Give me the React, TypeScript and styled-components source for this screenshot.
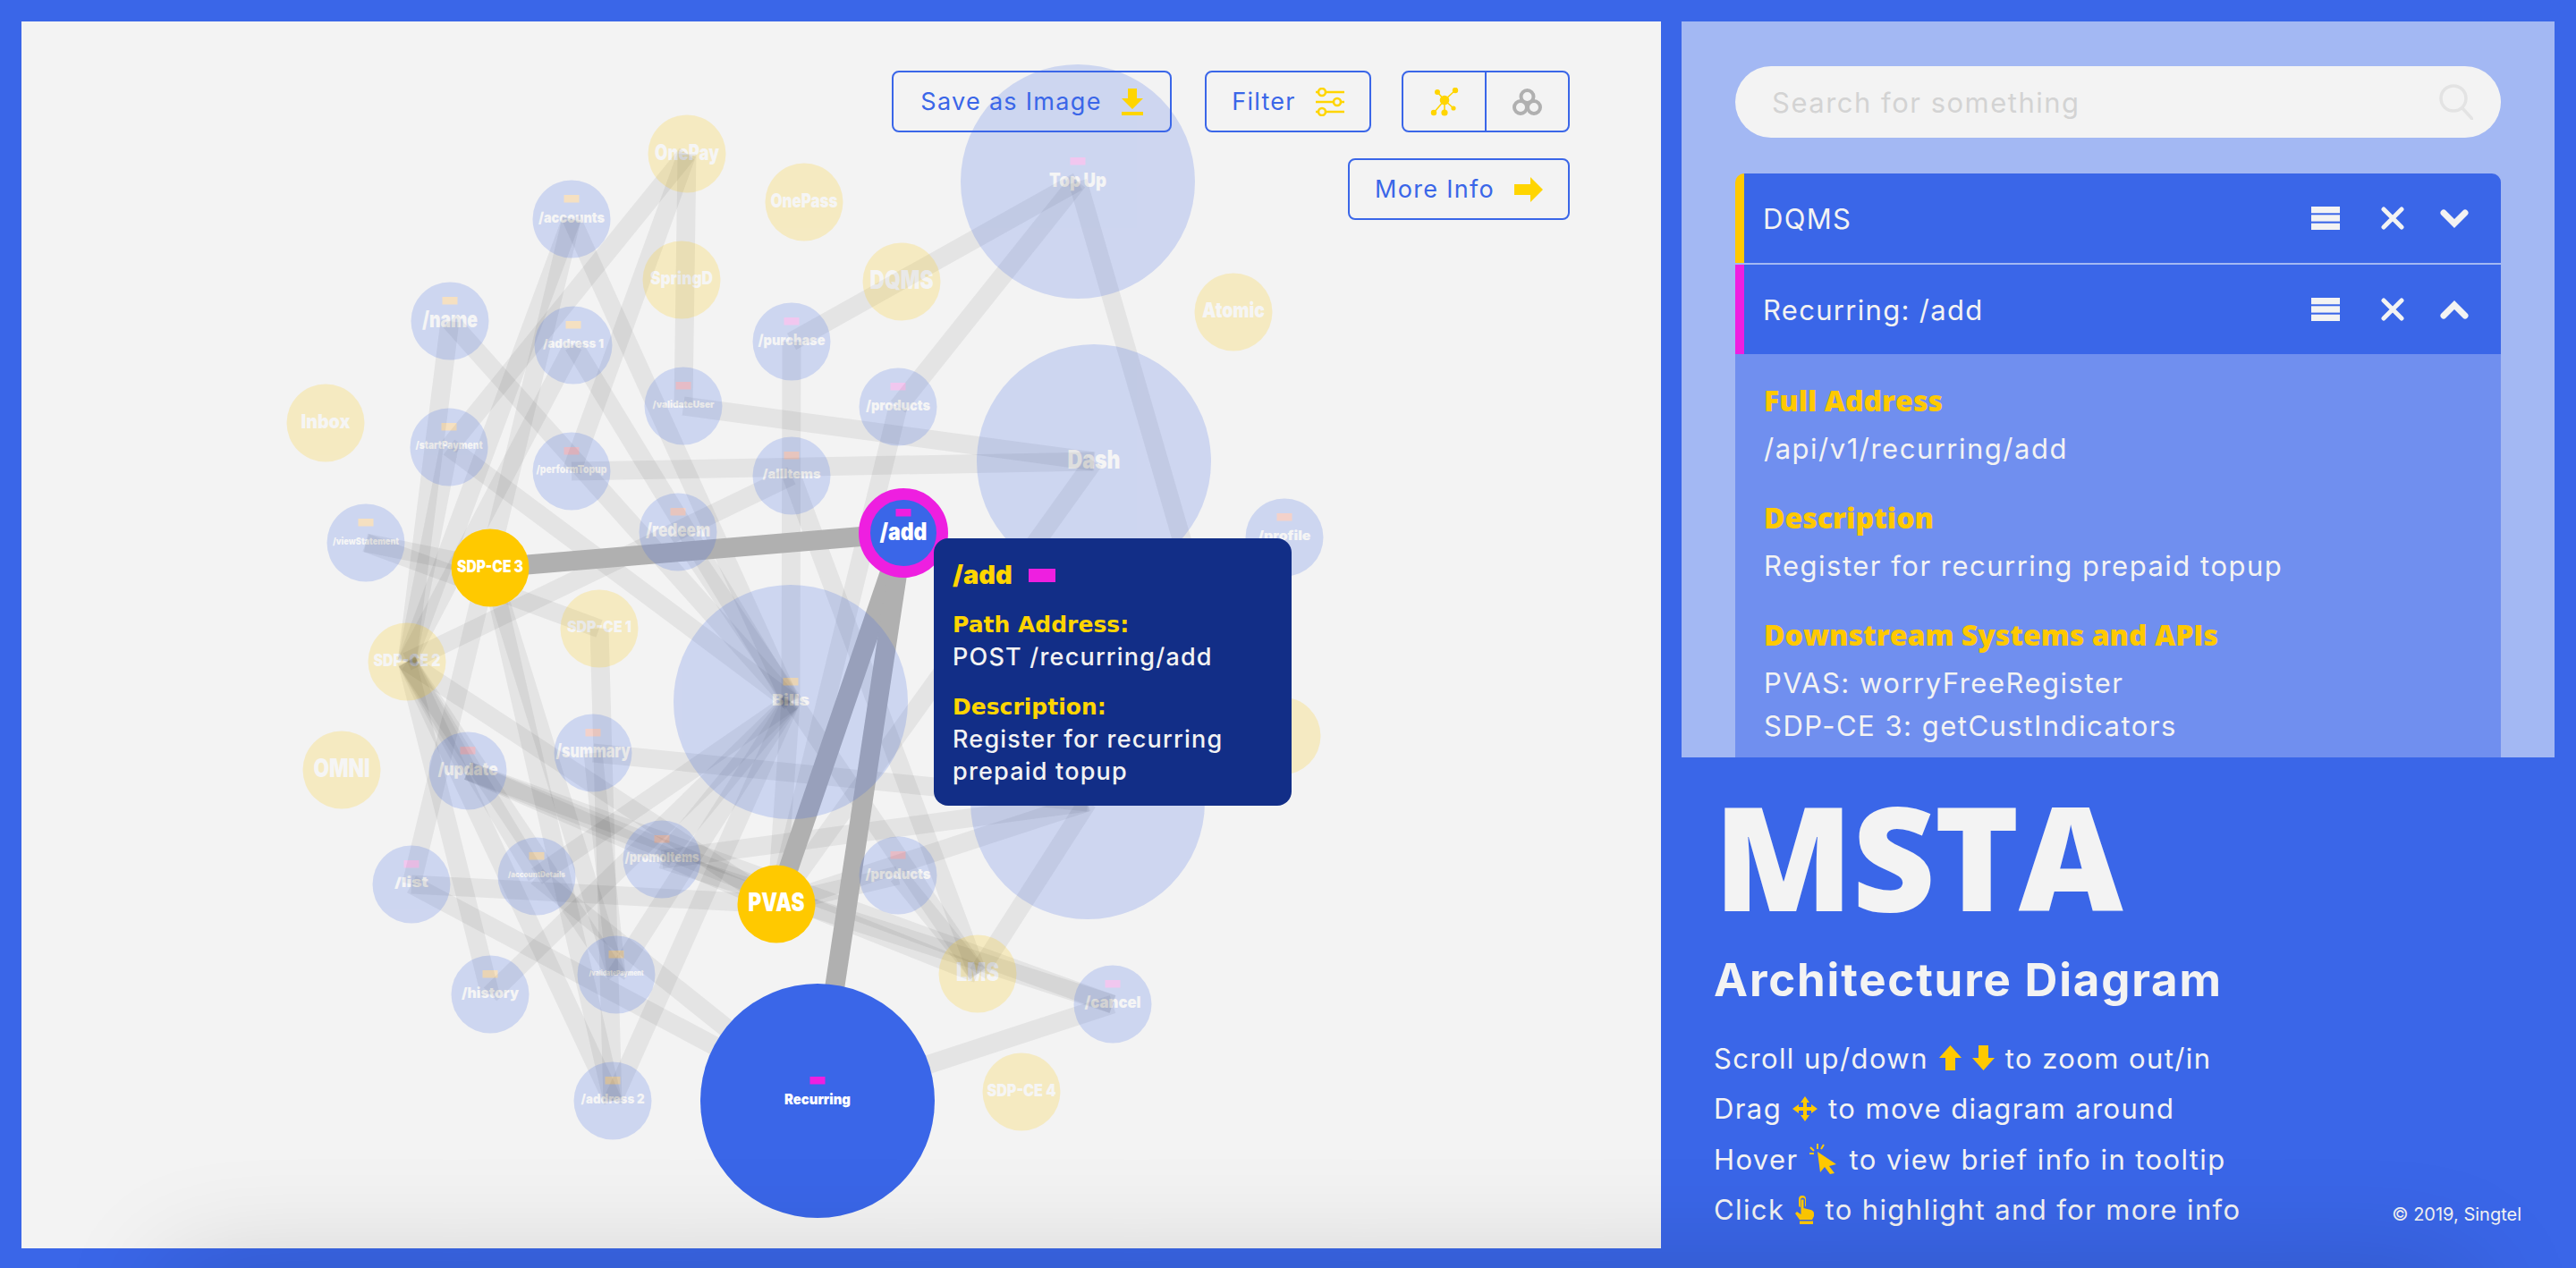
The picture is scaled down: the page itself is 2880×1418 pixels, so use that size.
import React from "react";
import styled, { createGlobalStyle } from "styled-components";

const BLUE = "#3a66e8";
const GOLD = "#ffc900";
const BRIGHT = "#ffd500";
const SANS = `Inter, "Noto Sans", "Liberation Sans", sans-serif`;
const HEAVY = `"Open Sans", "Noto Sans", "Liberation Sans", sans-serif`;
const WIDE = `"DejaVu Sans", Inter, sans-serif`;

const Global = createGlobalStyle`
  html, body { margin: 0; padding: 0; background: ${BLUE}; }
  * { box-sizing: border-box; }
`;

const Page = styled.div`
  position: relative;
  width: 2880px;
  height: 1418px;
  padding: 24px;
  display: grid;
  grid-template-columns: 1833px 976px;
  column-gap: 23px;
  background: ${BLUE};
  font-family: ${SANS};
  overflow: hidden;
`;
const BottomShade = styled.div`
  position: absolute;
  left: 190px;
  right: 120px;
  top: 1418px;
  height: 300px;
  pointer-events: none;
  box-shadow: 0 0 130px rgba(0, 0, 0, 0.16);
`;
const Canvas = styled.section`
  position: relative;
  height: 1372px;
  background: #f3f3f3;
  overflow: hidden;
`;
const Graph = styled.svg`
  display: block;
  width: 100%;
  height: 100%;
`;
const Edge = styled.line<{ $hot?: boolean }>`
  stroke: ${(p) => (p.$hot ? "#b0b0b0" : "rgba(0,0,0,0.06)")};
  stroke-width: ${(p) => (p.$hot ? 22 : 21)}px;
`;
const NodeGroup = styled.g<{ $on?: boolean }>`
  opacity: ${(p) => (p.$on ? 1 : 0.2)};
`;
const NodeLabel = styled.text`
  font-family: ${SANS};
  font-weight: 900;
  fill: #fff;
  text-anchor: middle;
`;

const Toolbar = styled.div`
  position: absolute;
  top: 55px;
  right: 102px;
  display: flex;
  flex-direction: column;
  align-items: flex-end;
  gap: 29px;
`;
const ToolRow = styled.div`
  display: flex;
  gap: 34px;
`;
const ToolButton = styled.button<{ $w: number }>`
  width: ${(p) => p.$w}px;
  height: 69px;
  display: flex;
  align-items: center;
  justify-content: center;
  gap: 22px;
  padding: 0;
  border: 2px solid ${BLUE};
  border-radius: 8px;
  background: transparent;
  color: ${BLUE};
  font-family: ${SANS};
  font-size: 27px;
  font-weight: 400;
  letter-spacing: 1.3px;
`;
const SaveButton = styled(ToolButton)`
  margin-right: 3px;
`;
const Toggle = styled.div`
  width: 188px;
  height: 69px;
  display: grid;
  grid-template-columns: 93px 1fr;
  border: 2px solid ${BLUE};
  border-radius: 8px;
`;
const ToggleCell = styled.div<{ $first?: boolean }>`
  display: flex;
  align-items: center;
  justify-content: center;
  border-right: ${(p) => (p.$first ? `2px solid ${BLUE}` : "none")};
`;

const Tip = styled.aside`
  position: absolute;
  left: 1020px;
  top: 578px;
  width: 400px;
  height: 299px;
  padding: 19px 20px 0 21px;
  background: #122e87;
  border-radius: 16px;
  color: #f3f3f3;
  font-size: 27px;
  font-weight: 500;
  letter-spacing: 1.2px;
  line-height: 36px;
`;
const TipTitle = styled.div`
  display: flex;
  align-items: center;
  gap: 18px;
  color: ${BRIGHT};
  font-size: 29px;
  font-weight: 900;
  letter-spacing: 0;
  height: 44px;
  margin-bottom: 16px;
`;
const TipSwatch = styled.span`
  width: 30px;
  height: 15px;
  background: #ee1fe0;
`;
const TipKey = styled.div`
  font-family: ${WIDE};
  color: ${BRIGHT};
  font-size: 25px;
  font-weight: 700;
  letter-spacing: 0;
`;
const TipText = styled.div`
  margin-bottom: 20px;
`;

const Side = styled.div`
  display: flex;
  flex-direction: column;
  height: 1372px;
`;
const Finder = styled.section`
  height: 823px;
  padding: 50px 60px 0;
  background: #a3b8f3;
  overflow: hidden;
`;
const SearchBox = styled.div`
  height: 80px;
  border-radius: 40px;
  background: #f3f3f3;
  display: flex;
  align-items: center;
  justify-content: space-between;
  padding: 0 31px 0 41px;
  color: #d3d3d3;
  font-size: 31px;
  letter-spacing: 1.5px;
  margin-bottom: 40px;
`;
const Row = styled.div<{ $mark: string; $top?: boolean }>`
  height: 100px;
  display: flex;
  align-items: center;
  padding: 0 36px 0 21px;
  background: ${BLUE};
  border-left: 10px solid ${(p) => p.$mark};
  border-radius: ${(p) => (p.$top ? "10px 10px 0 0" : "0")};
  margin-bottom: ${(p) => (p.$top ? "2px" : "0")};
  color: #f3f3f3;
  font-size: 31px;
  letter-spacing: 1.3px;
`;
const RowName = styled.span`
  flex: 1;
`;
const RowIcons = styled.span`
  display: flex;
  align-items: center;
  gap: 39px;
`;
const BarsSvg = styled.svg`
  margin-right: 6px;
`;
const Details = styled.div`
  background: #708fef;
  padding: 30px 32px;
  height: 600px;
  color: #f3f3f3;
  font-size: 31px;
  letter-spacing: 1.5px;
  line-height: 48px;
`;
const DetailHead = styled.div`
  font-family: ${HEAVY};
  color: ${GOLD};
  font-size: 32px;
  font-weight: 800;
  letter-spacing: 0;
  line-height: 44px;
  margin-bottom: 8px;
`;
const DetailBlock = styled.div`
  margin-bottom: 31px;
`;

const Intro = styled.section`
  position: relative;
  flex: 1;
  padding: 30px 0 0 36px;
  color: #f3f3f3;
`;
const Logo = styled.h1`
  margin: 0;
  font-family: ${HEAVY};
  font-size: 161px;
  font-weight: 800;
  line-height: 160px;
  letter-spacing: -1px;
`;
const Sub = styled.h2`
  margin: 29px 0 29px;
  font-size: 51px;
  font-weight: 700;
  letter-spacing: 1.8px;
  line-height: 60px;
`;
const HelpLine = styled.div`
  display: flex;
  align-items: center;
  gap: 12px;
  height: 56.5px;
  font-size: 31px;
  letter-spacing: 1.4px;
`;
const Copy = styled.div`
  position: absolute;
  right: 37px;
  bottom: 26px;
  font-size: 20px;
`;

type N = { id: string; label?: string; x: number; y: number; w: number; kind: "b" | "y"; big?: boolean; tag?: string; on?: boolean };
const O = "#ff9a00", M = "#ee1fe0", C = "#f0205a", R = "#f5502a";
const nodes: N[] = [
  { id: "OnePay", x: 768, y: 172, w: 72, kind: "y" },
  { id: "OnePass", x: 899, y: 226, w: 75, kind: "y" },
  { id: "Atomic", x: 1379, y: 349, w: 70, kind: "y" },
  { id: "SpringD", x: 762, y: 313, w: 70, kind: "y" },
  { id: "DQMS", x: 1008, y: 315, w: 71, kind: "y" },
  { id: "Inbox", x: 364, y: 473, w: 55, kind: "y" },
  { id: "SDP-CE 1", x: 670, y: 703, w: 72, kind: "y" },
  { id: "SDP-CE 2", x: 455, y: 740, w: 75, kind: "y" },
  { id: "OMNI", x: 382, y: 861, w: 63, kind: "y" },
  { id: "LMS", x: 1093, y: 1089, w: 48, kind: "y" },
  { id: "SDP-CE 4", x: 1142, y: 1221, w: 77, kind: "y" },
  { id: "Extra", label: "Chat", x: 1433, y: 823, w: 50, kind: "y" },
  { id: "Top Up", x: 1205, y: 203, w: 64, kind: "b", big: true, tag: M },
  { id: "Dash", x: 1223, y: 516, w: 59, kind: "b", big: true },
  { id: "Bills", x: 884, y: 785, w: 42, kind: "b", big: true, tag: O },
  { id: "Loans", x: 1216, y: 897, w: 60, kind: "b", big: true },
  { id: "/accounts", x: 639, y: 245, w: 74, kind: "b", tag: O },
  { id: "/name", x: 503, y: 359, w: 62, kind: "b", tag: O },
  { id: "/address 1", x: 641, y: 386, w: 68, kind: "b", tag: O },
  { id: "/purchase", x: 885, y: 382, w: 75, kind: "b", tag: M },
  { id: "/validateUser", x: 764, y: 454, w: 69, kind: "b", tag: C },
  { id: "/products", x: 1004, y: 455, w: 72, kind: "b", tag: M },
  { id: "/startPayment", x: 502, y: 500, w: 75, kind: "b", tag: O },
  { id: "/performTopup", x: 639, y: 527, w: 79, kind: "b", tag: C },
  { id: "/allItems", x: 885, y: 532, w: 65, kind: "b", tag: R },
  { id: "/redeem", x: 758, y: 595, w: 72, kind: "b", tag: R },
  { id: "/profile", x: 1436, y: 601, w: 59, kind: "b", tag: R },
  { id: "/viewStatement", x: 409, y: 607, w: 74, kind: "b", tag: O },
  { id: "/summary", x: 663, y: 842, w: 83, kind: "b", tag: R },
  { id: "/update", x: 523, y: 862, w: 67, kind: "b", tag: C },
  { id: "/promoItems", x: 740, y: 961, w: 83, kind: "b", tag: R },
  { id: "/list", x: 460, y: 989, w: 38, kind: "b", tag: M },
  { id: "/accountDetails", x: 600, y: 980, w: 64, kind: "b", tag: O },
  { id: "/products2", label: "/products", x: 1004, y: 979, w: 73, kind: "b", tag: C },
  { id: "/validatePayment", x: 689, y: 1090, w: 61, kind: "b", tag: O },
  { id: "/history", x: 548, y: 1112, w: 64, kind: "b", tag: O },
  { id: "/address 2", x: 685, y: 1231, w: 71, kind: "b", tag: O },
  { id: "/cancel", x: 1244, y: 1123, w: 63, kind: "b", tag: M },
  { id: "SDP-CE 3", x: 548, y: 635, w: 74, kind: "y", on: true },
  { id: "PVAS", x: 868, y: 1011, w: 63, kind: "y", on: true },
  { id: "Recurring", x: 914, y: 1231, w: 74, kind: "b", big: true, tag: M, on: true },
  { id: "/add", x: 1010, y: 596, w: 53, kind: "b", tag: M, on: true },
];
const edges: [string, string][] = [
  ["Top Up", "/purchase"], ["Top Up", "/products"], ["Top Up", "Under tip"],
  ["Dash", "/validateUser"], ["Dash", "/performTopup"], ["Dash", "PVAS"],
  ["OnePay", "/validateUser"], ["OnePay", "/startPayment"], ["OnePay", "/performTopup"],
  ["Bills", "/name"], ["Bills", "/accounts"], ["Bills", "/address 1"], ["Bills", "/startPayment"],
  ["Bills", "/purchase"], ["Bills", "/accountDetails"], ["Bills", "/validatePayment"],
  ["Bills", "/history"], ["Bills", "/address 2"], ["Bills", "/promoItems"], ["Bills", "PVAS"],
  ["/products", "PVAS"], ["/allItems", "LMS"], ["/redeem", "LMS"], ["/allItems", "SDP-CE 2"],
  ["SDP-CE 2", "/accounts"], ["SDP-CE 2", "/name"], ["SDP-CE 2", "/address 1"], ["SDP-CE 2", "/startPayment"],
  ["SDP-CE 2", "/history"], ["SDP-CE 2", "/address 2"], ["SDP-CE 2", "/validatePayment"],
  ["SDP-CE 2", "/accountDetails"], ["SDP-CE 2", "/update"], ["SDP-CE 2", "PVAS"],
  ["/accounts", "/list"], ["SDP-CE 3", "/address 2"], ["SDP-CE 3", "/validatePayment"],
  ["SDP-CE 3", "/viewStatement"], ["/viewStatement", "SDP-CE 1"],
  ["SDP-CE 1", "/address 2"], ["/summary", "/validatePayment"],
  ["/list", "PVAS"], ["/list", "Recurring"], ["/accountDetails", "Recurring"],
  ["/summary", "Loans"], ["/promoItems", "Loans"], ["/update", "PVAS"],
  ["PVAS", "/products2"], ["PVAS", "Loans"], ["LMS", "/products2"], ["LMS", "Loans"], ["LMS", "/update"],
  ["/cancel", "Recurring"], ["/cancel", "/promoItems"], ["/cancel", "/update"],
];
const hot: [string, string][] = [["SDP-CE 3", "/add"], ["PVAS", "/add"], ["Recurring", "/add"]];
const at = (id: string) => (id === "Under tip" ? { x: 1385, y: 823 } : nodes.find((n) => n.id === id)!);

const DiagramNode = ({ n }: { n: N }) => {
  const r = n.big ? 131 : 43.5;
  const label = n.label ?? n.id;
  const fs = Math.min(n.w / (label.length * 0.5), 28);
  const isAdd = n.id === "/add";
  const hidden = n.id === "Extra" || n.id === "Loans";
  return (
    <NodeGroup $on={n.on}>
      <circle
        cx={n.x}
        cy={n.y}
        r={r}
        fill={n.kind === "b" ? BLUE : GOLD}
        stroke={isAdd ? "#ee1fe0" : "none"}
        strokeWidth={isAdd ? 13 : 0}
      />
      {n.tag && <rect x={n.x - 8.5} y={n.y - 27} width={17} height={8.5} fill={n.tag} />}
      {!hidden && (
        <NodeLabel x={n.x} y={n.y - 2 + fs * 0.36} fontSize={fs} textLength={n.w} lengthAdjust="spacingAndGlyphs">
          {label}
        </NodeLabel>
      )}
    </NodeGroup>
  );
};

const DownloadIcon = () => (
  <svg width="24" height="30" viewBox="0 0 24 30" fill={BRIGHT}>
    <path d="M7 0h10v11h7L12 23 0 11h7z" />
    <rect x="0" y="26" width="24" height="4" />
  </svg>
);
const SlidersIcon = () => (
  <svg width="32" height="32" viewBox="0 0 32 32" fill="none" stroke={BRIGHT} strokeWidth="2.6">
    <path d="M0 5h3M11 5h21M0 16h20M28 16h4M0 27h3M11 27h21" />
    <circle cx="7" cy="5" r="4" />
    <circle cx="24" cy="16" r="4" />
    <circle cx="7" cy="27" r="4" />
  </svg>
);
const ClusterIcon = () => (
  <svg width="32" height="32" viewBox="0 0 32 32" fill={BRIGHT} stroke={BRIGHT} strokeWidth="1.6">
    <path d="M16 14L8 5M16 14L28 3M16 14L4 28M16 14L16 28M16 14L26 23" fill="none" />
    <circle cx="16" cy="14" r="4.500" />
    <circle cx="8" cy="5" r="2.200" />
    <circle cx="28" cy="3" r="2.400" />
    <circle cx="4" cy="28" r="2.400" />
    <circle cx="16" cy="28" r="2.800" />
    <circle cx="26" cy="23" r="1.800" />
  </svg>
);
const VennIcon = () => (
  <svg width="33" height="30" viewBox="0 0 33 30" fill="none" stroke="#b0b0b0" strokeWidth="4">
    <circle cx="16.500" cy="9" r="7" />
    <circle cx="9" cy="21" r="7" />
    <circle cx="24" cy="21" r="7" />
  </svg>
);
const ArrowIcon = () => (
  <svg width="32" height="28" viewBox="0 0 32 28" fill={BRIGHT}>
    <path d="M0 8h18V0l14 14-14 14v-8H0z" />
  </svg>
);
const SearchIcon = () => (
  <svg width="38" height="40" viewBox="0 0 38 40" fill="none" stroke="#e3e3e3" strokeWidth="3.500">
    <circle cx="16" cy="16" r="14" />
    <path d="M26 27l11 12" strokeLinecap="round" />
  </svg>
);
const BarsIcon = () => (
  <BarsSvg width="32" height="26" viewBox="0 0 32 26" fill="#f3f3f3">
    <rect width="32" height="7.300" />
    <rect y="9.300" width="32" height="7.300" />
    <rect y="18.700" width="32" height="7.300" />
  </BarsSvg>
);
const CrossIcon = () => (
  <svg width="28" height="26" viewBox="0 0 28 26" fill="none" stroke="#f3f3f3" strokeWidth="5" strokeLinecap="round">
    <path d="M4 3l20 20M24 3L4 23" />
  </svg>
);
const ChevronIcon = ({ up }: { up?: boolean }) => (
  <svg width="32" height="21" viewBox="0 0 32 21" fill="none" stroke="#f3f3f3" strokeWidth="7" strokeLinecap="round" strokeLinejoin="miter">
    <path d={up ? "M4 17L16 5l12 12" : "M4 4l12 12L28 4"} />
  </svg>
);
const UpIcon = ({ flip }: { flip?: boolean }) => (
  <svg width="25" height="28" viewBox="0 0 25 28" fill={GOLD} transform={flip ? "rotate(180)" : undefined}>
    <path d="M12.500 0L25 14h-7v14H7V14H0z" />
  </svg>
);
const MoveIcon = () => (
  <svg width="28" height="28" viewBox="0 0 28 28" fill={GOLD}>
    <path d="M14 0l5 7h-3v5h5V9l7 5-7 5v-3h-5v5h3l-5 7-5-7h3v-5H7v3l-7-5 7-5v3h5V7H9z" />
  </svg>
);
const ClickIcon = () => (
  <svg width="33" height="34" viewBox="0 0 33 34" fill={GOLD}>
    <path d="M9 9l21 14-8 2 6 8-5 1-6-8-5 6z" />
    <path d="M9 0v6M1 4l4 4M0 11h5M16 1l-3 5" stroke={GOLD} strokeWidth="2" fill="none" />
  </svg>
);
const HandIcon = () => (
  <svg width="21" height="32" viewBox="0 0 21 32" fill={GOLD}>
    <path d="M4 4a4 4 0 0 1 8 0v7a2 2 0 0 1-1 1.700V5a2.500 2.500 0 0 0-5 0v8a2 2 0 0 1-2-2z" />
    <path d="M6.500 4.500h3V14l8 2c2 .5 3.500 2 3.500 4v3l-2 4H5l-5-7 2-2 4.500 3z" />
    <rect x="5" y="28.500" width="15" height="3.500" />
  </svg>
);

export default function App() {
  return (
    <Page>
      <Global />
      <Canvas>
        <Graph viewBox="24 24 1833 1372">
          {edges.map(([a, b]) => (
            <Edge key={a + b} x1={at(a).x} y1={at(a).y} x2={at(b).x} y2={at(b).y} />
          ))}
          {hot.map(([a, b]) => (
            <Edge key={a + b} $hot x1={at(a).x} y1={at(a).y} x2={at(b).x} y2={at(b).y} />
          ))}
          {nodes.map((n) => (
            <DiagramNode key={n.id} n={n} />
          ))}
        </Graph>
        <Toolbar>
          <ToolRow>
            <SaveButton $w={313}>
              Save as Image <DownloadIcon />
            </SaveButton>
            <ToolButton $w={186}>
              Filter <SlidersIcon />
            </ToolButton>
            <Toggle>
              <ToggleCell $first>
                <ClusterIcon />
              </ToggleCell>
              <ToggleCell>
                <VennIcon />
              </ToggleCell>
            </Toggle>
          </ToolRow>
          <ToolButton $w={248}>
            More Info <ArrowIcon />
          </ToolButton>
        </Toolbar>
        <Tip>
          <TipTitle>
            /add <TipSwatch />
          </TipTitle>
          <TipKey>Path Address:</TipKey>
          <TipText>POST /recurring/add</TipText>
          <TipKey>Description:</TipKey>
          <div>Register for recurring prepaid topup</div>
        </Tip>
      </Canvas>
      <Side>
        <Finder>
          <SearchBox>
            Search for something <SearchIcon />
          </SearchBox>
          <Row $mark={GOLD} $top>
            <RowName>DQMS</RowName>
            <RowIcons>
              <BarsIcon />
              <CrossIcon />
              <ChevronIcon />
            </RowIcons>
          </Row>
          <Row $mark="#ee1fe0">
            <RowName>Recurring: /add</RowName>
            <RowIcons>
              <BarsIcon />
              <CrossIcon />
              <ChevronIcon up />
            </RowIcons>
          </Row>
          <Details>
            <DetailBlock>
              <DetailHead>Full Address</DetailHead>
              /api/v1/recurring/add
            </DetailBlock>
            <DetailBlock>
              <DetailHead>Description</DetailHead>
              Register for recurring prepaid topup
            </DetailBlock>
            <DetailBlock>
              <DetailHead>Downstream Systems and APIs</DetailHead>
              PVAS: worryFreeRegister
              <br />
              SDP-CE 3: getCustIndicators
            </DetailBlock>
          </Details>
        </Finder>
        <Intro>
          <Logo>MSTA</Logo>
          <Sub>Architecture Diagram</Sub>
          <HelpLine>
            Scroll up/down <UpIcon /> <UpIcon flip /> to zoom out/in
          </HelpLine>
          <HelpLine>
            Drag <MoveIcon /> to move diagram around
          </HelpLine>
          <HelpLine>
            Hover <ClickIcon /> to view brief info in tooltip
          </HelpLine>
          <HelpLine>
            Click <HandIcon /> to highlight and for more info
          </HelpLine>
          <Copy>© 2019, Singtel</Copy>
        </Intro>
      </Side>
      <BottomShade />
    </Page>
  );
}
